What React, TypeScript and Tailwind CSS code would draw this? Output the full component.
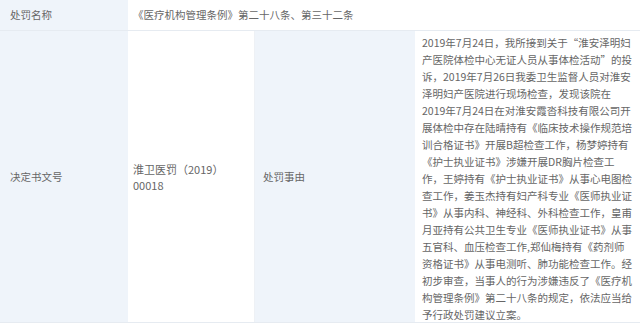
const content =
  '2019年7月24日，我所接到关于“淮安泽明妇产医院体检中心无证人员从事体检活动”的投诉，2019年7月26日我委卫生监督人员对淮安泽明妇产医院进行现场检查，发现该院在2019年7月24日在对淮安霞沓科技有限公司开展体检中存在陆晴持有《临床技术操作规范培训合格证书》开展B超检查工作，杨梦婷持有《护士执业证书》涉嫌开展DR胸片检查工作，王婷持有《护士执业证书》从事心电图检查工作，姜玉杰持有妇产科专业《医师执业证书》从事内科、神经科、外科检查工作，皇甫月亚持有公共卫生专业《医师执业证书》从事五官科、血压检查工作,郑仙梅持有《药剂师资格证书》从事电测听、肺功能检查工作。经初步审查，当事人的行为涉嫌违反了《医疗机构管理条例》第二十八条的规定，依法应当给予行政处罚建议立案。';

export default function App() {
  return (
    <div className="w-[640px] h-[324px] overflow-hidden bg-white text-[10.5px] text-[#666] font-['Noto_Sans_CJK_SC',sans-serif]">
      {/* 处罚名称 */}
      <div className="flex h-[31px] border-b border-[#e6ebf1]">
        <div className="w-[128px] shrink-0 bg-[#eff4fa] flex items-center pl-[10px]">处罚名称</div>
        <div className="flex-1 flex items-center pl-[5px]">《医疗机构管理条例》第二十八条、第三十二条</div>
      </div>

      {/* 决定书文号 / 处罚事由 */}
      <div className="flex h-[292px] border-b border-[#e6ebf1]">
        <div className="w-[128px] shrink-0 bg-[#eff4fa] flex items-center pl-[10px]">决定书文号</div>
        <div className="w-[127px] shrink-0 flex items-center pl-[5px] pr-[12px] leading-[16px] text-[11px] border-r border-[#eef1f5]">
          淮卫医罚（2019）00018
        </div>
        <div className="w-[160px] shrink-0 bg-[#eff4fa] flex items-center pl-[8px]">处罚事由</div>
        <div className="flex-1 pl-[7px] pt-[3px]">
          <p className="w-[211px] leading-[17px]">{content}</p>
        </div>
      </div>
    </div>
  );
}
